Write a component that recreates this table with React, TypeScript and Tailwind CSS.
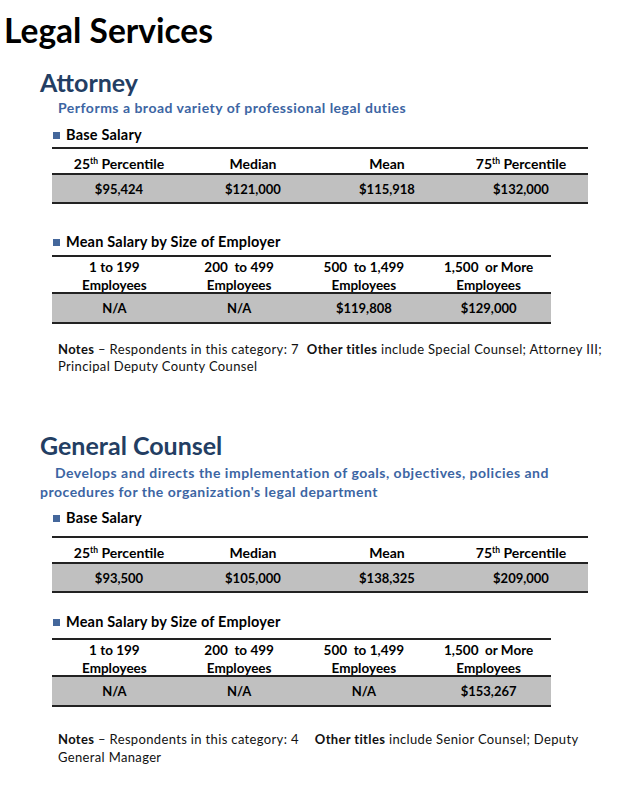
import React from "react";

const th = <span className="relative -top-[5px] text-[8.5px] leading-none">th</span>;

function Heading({ children, className = "" }: { children: React.ReactNode; className?: string }) {
  return (
    <div className={`flex items-center h-[18px] pl-[13px] text-[14.5px] tracking-[0.2px] font-bold text-black ${className}`}>
      <span className="w-[7px] h-[7px] bg-[#44679b] mr-[6px]" />
      <span>{children}</span>
    </div>
  );
}

function BaseTable({ values, className = "" }: { values: string[]; className?: string }) {
  const heads: React.ReactNode[] = [
    <>25{th} Percentile</>,
    "Median",
    "Mean",
    <>75{th} Percentile</>,
  ];
  return (
    <div className={`ml-[12px] w-[536px] border-t-2 border-b-2 border-[#222] font-bold text-black ${className}`}>
      <div className="grid grid-cols-[repeat(4,134px)] h-[26px] items-center border-b-2 border-[#222] text-[14px]">
        {heads.map((h, i) => (
          <div key={i} className="text-center leading-[26px] pt-[2px]">{h}</div>
        ))}
      </div>
      <div className="grid grid-cols-[repeat(4,134px)] h-[27px] items-center bg-[#c0c0c0] text-[13px]">
        {values.map((v) => (
          <div key={v} className="text-center leading-[27px] pt-[1px]">{v}</div>
        ))}
      </div>
    </div>
  );
}

function SizeTable({ values, className = "" }: { values: string[]; className?: string }) {
  const heads = ["1 to 199", "200  to 499", "500  to 1,499", "1,500  or More"];
  return (
    <div className={`ml-[12px] w-[499px] border-t-2 border-b-2 border-[#222] font-bold text-black ${className}`}>
      <div className="grid grid-cols-[repeat(4,124.75px)] h-[37px] border-b-2 border-[#222] text-[13.5px]">
        {heads.map((h) => (
          <div key={h} className="text-center leading-[18px] pt-[1px] whitespace-pre">
            {h}
            <br />
            Employees
          </div>
        ))}
      </div>
      <div className="grid grid-cols-[repeat(4,124.75px)] h-[28px] items-center bg-[#c0c0c0] text-[13px]">
        {values.map((v, i) => (
          <div key={i} className="text-center leading-[28px]">{v}</div>
        ))}
      </div>
    </div>
  );
}

export default function App() {
  return (
    <div className="w-[638px] h-[786px] bg-white font-['Lato',sans-serif] overflow-hidden">
      <h1 className="pt-[10px] pl-[4px] text-[33.5px] leading-[40px] font-bold text-black">Legal Services</h1>

      <div className="pl-[40px]">
        <h2 className="mt-[17px] text-[25px] leading-[30px] font-bold text-[#233e63]">Attorney</h2>
        <p className="mt-[2px] pl-[18px] text-[14px] tracking-[0.5px] leading-[18px] font-bold text-[#3c65a3]">
          Performs a broad variety of professional legal duties
        </p>
        <Heading className="mt-[9px]">Base Salary</Heading>
        <BaseTable className="mt-[3px]" values={["$95,424", "$121,000", "$115,918", "$132,000"]} />
        <Heading className="mt-[29px]">Mean Salary by Size of Employer</Heading>
        <SizeTable className="mt-[4px]" values={["N/A", "N/A", "$119,808", "$129,000"]} />
        <p className="mt-[17px] pl-[18px] text-[13px] tracking-[0.35px] leading-[17px] text-[#111] whitespace-nowrap">
          <b>Notes</b> – Respondents in this category: 7<b className="ml-[8px]">Other titles</b> include Special Counsel; Attorney III;
          <br />
          Principal Deputy County Counsel
        </p>

        <h2 className="mt-[55px] text-[25px] leading-[30px] font-bold text-[#233e63]">General Counsel</h2>
        <p className="mt-[3px] text-[14px] tracking-[0.5px] leading-[19px] font-bold text-[#3c65a3] whitespace-nowrap">
          <span className="pl-[15px]">Develops and directs the implementation of goals, objectives, policies and</span>
          <br />
          procedures for the organization's legal department
        </p>
        <Heading className="mt-[8px]">Base Salary</Heading>
        <BaseTable className="mt-[9px]" values={["$93,500", "$105,000", "$138,325", "$209,000"]} />
        <Heading className="mt-[20px]">Mean Salary by Size of Employer</Heading>
        <SizeTable className="mt-[7px]" values={["N/A", "N/A", "N/A", "$153,267"]} />
        <p className="mt-[23px] pl-[18px] text-[13px] tracking-[0.35px] leading-[18px] text-[#111] whitespace-nowrap">
          <b>Notes</b> – Respondents in this category: 4<b className="ml-[16px]">Other titles</b> include Senior Counsel; Deputy
          <br />
          General Manager
        </p>
      </div>
    </div>
  );
}
